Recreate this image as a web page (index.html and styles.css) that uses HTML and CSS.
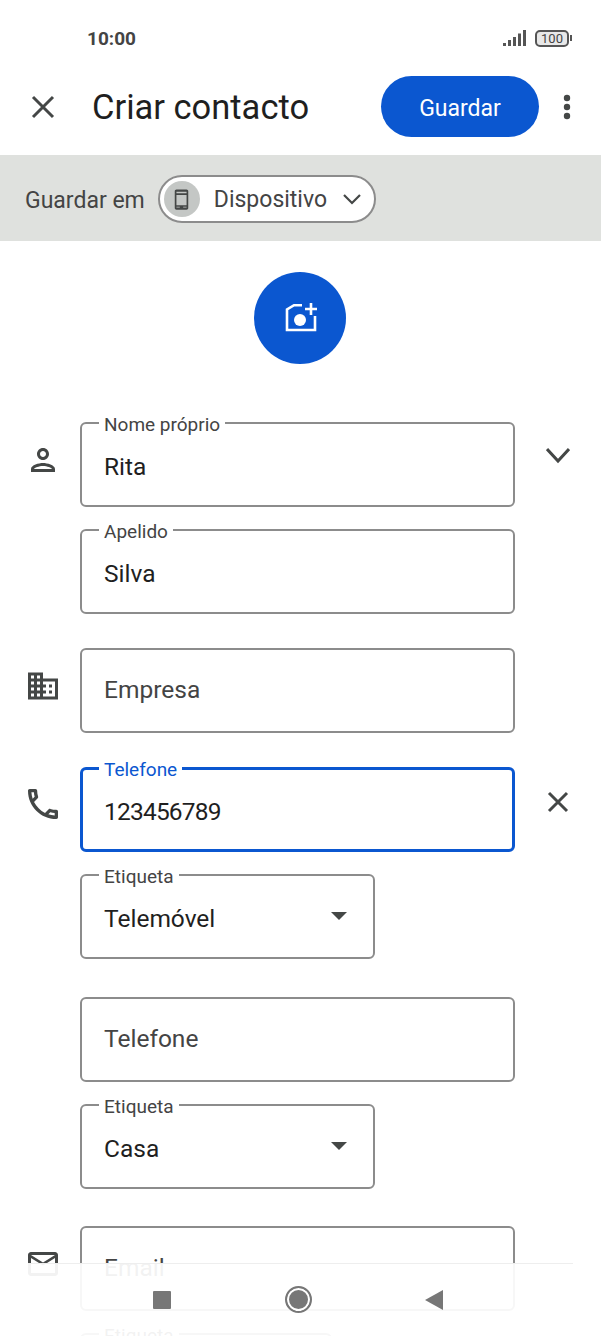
FILE: index.html
```html
<!DOCTYPE html>
<html lang="pt">
<head>
	<meta charset="UTF-8">
	<title>Criar contacto</title>
	<link rel="stylesheet" href="styles.css">
</head>
<body>
	<section class="screen">

		<div class="status">
			<span class="time">10:00</span>
			<svg class="signal" width="23" height="16" viewBox="0 0 23 16">
				<rect x="0" y="13" width="3" height="3"/>
				<rect x="5" y="10" width="3" height="6"/>
				<rect x="10" y="7" width="3" height="9"/>
				<rect x="15" y="3.500" width="3" height="12.500"/>
				<rect x="20" y="0" width="3" height="16"/>
			</svg>
			<div class="battery"><span>100</span></div>
			<div class="battery-tip"></div>
		</div>

		<header class="header">
			<svg class="icon" width="36" height="36" viewBox="0 0 36 36"><path class="line" d="M8 8l20 20M28 8L8 28"/></svg>
			<h1 class="title">Criar contacto</h1>
			<button class="save">Guardar</button>
			<svg class="dots" width="24" height="36" viewBox="0 0 24 36">
				<circle cx="12" cy="9" r="3.200"/>
				<circle cx="12" cy="18" r="3.200"/>
				<circle cx="12" cy="27" r="3.200"/>
			</svg>
		</header>

		<div class="save-in">
			<span class="save-label">Guardar em</span>
			<div class="chip">
				<div class="chip-icon">
					<svg width="27" height="27" viewBox="0 0 24 24"><path d="M16.500 3h-9C6.700 3 6 3.700 6 4.500v15c0 .8.700 1.500 1.500 1.500h9c.8 0 1.500-.7 1.500-1.500v-15c0-.8-.7-1.500-1.500-1.500zm0 2v1.500h-9V5h9zm0 3v9h-9V8h9zm0 11h-3v-.5h-3v.5h-3v-.5h9v.5z"/></svg>
				</div>
				<span class="chip-text">Dispositivo</span>
				<svg class="chip-arrow" width="24" height="24" viewBox="0 0 24 24"><path class="line thin" d="M4 8l8 8 8-8"/></svg>
			</div>
		</div>

		<div class="avatar">
			<svg class="camera" width="36" height="32" viewBox="0 0 36 32">
				<path class="photo" d="M18 3.200H10L3 7.500V28h28V14"/>
				<circle class="lens" cx="16" cy="18" r="6"/>
				<path class="photo" d="M27 1v12M21 7h12"/>
			</svg>
		</div>

		<form class="form">

			<div class="row">
				<svg class="icon row-icon" width="36" height="36" viewBox="0 0 24 24"><path d="M12 6c1.100 0 2 .9 2 2s-.9 2-2 2-2-.9-2-2 .9-2 2-2m0 10c2.700 0 5.800 1.290 6 2H6c.23-.72 3.310-2 6-2m0-12C9.790 4 8 5.790 8 8s1.790 4 4 4 4-1.790 4-4-1.790-4-4-4zm0 10c-2.670 0-8 1.340-8 4v2h16v-2c0-2.660-5.330-4-8-4z"/></svg>
				<div class="fields">
					<div class="field"><label>Nome próprio</label><span class="value">Rita</span></div>
					<div class="field"><label>Apelido</label><span class="value">Silva</span></div>
				</div>
				<svg class="side-icon expand" width="24" height="24" viewBox="0 0 24 24"><path class="line" d="M1 6l11 12L23 6"/></svg>
			</div>

			<div class="row">
				<svg class="icon row-icon" width="36" height="36" viewBox="0 0 24 24"><path d="M12 7V3H2v18h20V7H12zM6 19H4v-2h2v2zm0-4H4v-2h2v2zm0-4H4V9h2v2zm0-4H4V5h2v2zm4 12H8v-2h2v2zm0-4H8v-2h2v2zm0-4H8V9h2v2zm0-4H8V5h2v2zm10 12h-8v-2h2v-2h-2v-2h2v-2h-2V9h8v10zm-2-8h-2v2h2v-2zm0 4h-2v2h2v-2z"/></svg>
				<div class="fields">
					<div class="field empty"><span class="value">Empresa</span></div>
				</div>
			</div>

			<div class="row phones">
				<svg class="icon row-icon phone" width="40" height="40" viewBox="0 0 24 24"><path d="M6.540 5c.06.89.21 1.760.45 2.590l-1.200 1.200c-.41-1.200-.67-2.470-.76-3.790h1.510m9.860 12.020c.85.24 1.720.39 2.600.45v1.490c-1.320-.09-2.590-.35-3.800-.75l1.200-1.190M7.500 3H4c-.55 0-1 .45-1 1 0 9.390 7.610 17 17 17 .55 0 1-.45 1-1v-3.490c0-.55-.45-1-1-1-1.240 0-2.450-.2-3.570-.57-.1-.04-.21-.05-.31-.05-.26 0-.51.1-.71.29l-2.200 2.200c-2.830-1.450-5.150-3.760-6.590-6.590l2.200-2.200c.28-.28.36-.67.25-1.020C8.700 6.450 8.500 5.250 8.500 4c0-.55-.45-1-1-1z"/></svg>
				<div class="fields">
					<div class="field focused"><label>Telefone</label><span class="value digits">123456789</span></div>
					<div class="field select"><label>Etiqueta</label><span class="value">Telemóvel</span><i class="caret"></i></div>
					<div class="field empty second"><span class="value">Telefone</span></div>
					<div class="field select"><label>Etiqueta</label><span class="value">Casa</span><i class="caret"></i></div>
				</div>
				<svg class="side-icon remove" width="24" height="24" viewBox="0 0 24 24"><path class="line" d="M3 3l18 18M21 3L3 21"/></svg>
			</div>

			<div class="row">
				<svg class="icon row-icon" width="36" height="36" viewBox="0 0 24 24"><path d="M22 6c0-1.100-.9-2-2-2H4c-1.100 0-2 .9-2 2v12c0 1.100.9 2 2 2h16c1.100 0 2-.9 2-2V6zm-2 0l-8 5-8-5h16zm0 12H4V8l8 5 8-5v10z"/></svg>
				<div class="fields">
					<div class="field empty"><span class="value">Email</span></div>
					<div class="field select short"><label>Etiqueta</label></div>
				</div>
			</div>

		</form>

		<nav class="nav">
			<div class="nav-square"></div>
			<div class="nav-circle"></div>
			<div class="nav-back"></div>
		</nav>

	</section>
</body>
</html>
```

FILE: styles.css
```css
* {
	box-sizing: border-box;
}

body {
	margin: 0;
	background: #fff;
	font-family: Roboto, sans-serif;
	color: #1f1f1f;
}

.screen {
	position: relative;
	width: 601px;
	height: 1336px;
	overflow: hidden;
}

svg {
	display: block;
	flex: none;
	fill: #444746;
}

.line {
	fill: none;
	stroke: #444746;
	stroke-width: 3;
}

.line.thin {
	stroke-width: 2.200;
}

.status {
	display: flex;
	align-items: center;
	height: 76px;
	padding-left: 87px;
}

.time {
	font-size: 19px;
	font-weight: 700;
	color: #444;
	margin-right: auto;
}

.signal {
	fill: #555;
}

.battery {
	display: flex;
	align-items: center;
	justify-content: center;
	width: 34px;
	height: 17px;
	margin-left: 9px;
	border: 2px solid #555;
	border-radius: 5px;
	background: #e8e8e8;
	font-size: 13px;
	color: #444;
}

.battery-tip {
	width: 2px;
	height: 6px;
	margin: 0 29px 0 1px;
	background: #555;
}

.header {
	display: flex;
	align-items: flex-start;
	height: 79px;
	padding: 0 22px 0 25px;
}

.header .icon {
	margin-top: 13px;
}

.title {
	margin: 8px auto 0 31px;
	font-size: 34.500px;
	font-weight: 400;
	line-height: 46px;
}

.save {
	width: 158px;
	height: 61px;
	padding-top: 4px;
	border: 0;
	border-radius: 31px;
	background: #0b57d0;
	color: white;
	font-family: inherit;
	font-size: 23px;
	font-weight: 400;
}

.dots {
	margin: 13px 0 0 16px;
}

.save-in {
	display: flex;
	align-items: center;
	gap: 13px;
	height: 86px;
	padding: 2px 0 0 25px;
	background: #dfe1de;
}

.save-label {
	padding-top: 2px;
	font-size: 23px;
	color: #444;
}

.chip {
	display: flex;
	align-items: center;
	width: 218px;
	height: 48px;
	padding-left: 4px;
	border: 2px solid #8c8c8c;
	border-radius: 24px;
	background: white;
}

.chip-icon {
	display: flex;
	align-items: center;
	justify-content: center;
	width: 36px;
	height: 36px;
	border-radius: 50%;
	background: #c4c7c5;
}

.chip-text {
	margin-left: 14px;
	font-size: 23px;
	color: #444;
}

.chip-arrow {
	margin-left: 13px;
}

.avatar {
	display: flex;
	align-items: center;
	justify-content: center;
	width: 92px;
	height: 92px;
	margin: 31px 0 58px 254px;
	border-radius: 50%;
	background: #0b57d0;
}

.camera {
	margin-left: 3px;
}

.photo {
	fill: none;
	stroke: white;
	stroke-width: 2.600;
}

.lens {
	fill: white;
}

.row {
	display: flex;
	align-items: flex-start;
	padding-left: 25px;
	margin-bottom: 34px;
}

.row.phones {
	margin-bottom: 37px;
}

.row-icon {
	margin: 20px 19px 0 0;
}

.row-icon.phone {
	margin: 17px 17px 0 -2px;
}

.fields {
	display: flex;
	flex-direction: column;
	gap: 22px;
	width: 435px;
}

.field {
	position: relative;
	display: flex;
	align-items: center;
	flex: none;
	height: 85px;
	padding: 3px 22px 0 22px;
	border: 2px solid #8c8c8c;
	border-radius: 6px;
	font-size: 24.500px;
}

.field label {
	position: absolute;
	top: -10px;
	left: 17px;
	padding: 0 5px;
	background: white;
	font-size: 19px;
	line-height: 22px;
	color: #444;
}

.field.empty {
	padding: 0 22px 2px;
	color: #444;
}

.field.focused {
	padding-left: 21px;
	border: 3px solid #0b57d0;
}

.field.focused label {
	top: -11px;
	left: 16px;
	color: #0b57d0;
}

.digits {
	letter-spacing: -.8px;
}

.field.select {
	width: 295px;
}

.field.short {
	width: 252px;
}

.field.second {
	margin-top: 16px;
}

.caret {
	margin-left: auto;
	margin-right: 4px;
	margin-bottom: 4px;
	border-top: 8px solid #444746;
	border-left: 8px solid transparent;
	border-right: 8px solid transparent;
}

.side-icon {
	margin-left: 31px;
}

.expand {
	margin-top: 21px;
}

.remove {
	margin-top: 23px;
}

/* sits over the form, the fields show through it */
.nav {
	position: absolute;
	left: 0;
	right: 0;
	bottom: 0;
	display: flex;
	align-items: center;
	justify-content: center;
	gap: 113px;
	height: 73px;
	padding-right: 6px;
	background: rgba(255, 255, 255, .93);
}

.nav::before {
	content: "";
	position: absolute;
	top: 0;
	left: 28px;
	right: 28px;
	height: 1px;
	background: #eee;
}

.nav-square {
	width: 18px;
	height: 18px;
	margin-right: 1px;
	border-radius: 1px;
	background: #777;
}

.nav-circle {
	width: 27px;
	height: 27px;
	border: 2px solid #777;
	border-radius: 50%;
	background: #777;
	box-shadow: inset 0 0 0 2px white;
}

.nav-back {
	width: 0;
	height: 0;
	border-top: 10px solid transparent;
	border-bottom: 10px solid transparent;
	border-right: 18px solid #777;
}
```
